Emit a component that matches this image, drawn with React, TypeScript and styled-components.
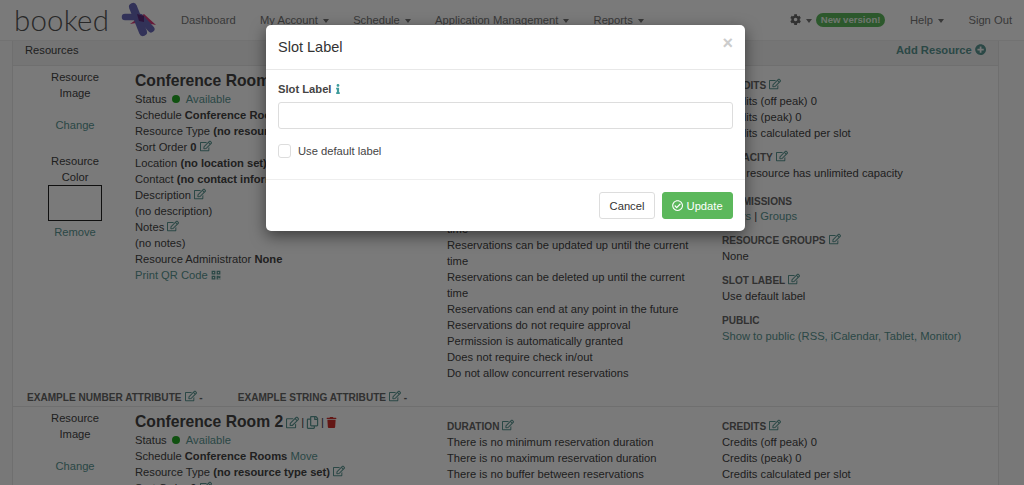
import React from "react";
import styled, { createGlobalStyle } from "styled-components";
import { FaRegEdit, FaRegCopy, FaTrash, FaQrcode, FaCog, FaPlusCircle, FaRegCheckCircle, FaInfo } from "react-icons/fa";

const TEAL = "#5a9692";

const Global = createGlobalStyle`
  html, body { margin: 0; padding: 0; background: #fff; }
  body { font-family: "Liberation Sans", Arial, sans-serif; font-size: 11.2px; line-height: 16px; color: #444; }
`;

const Page = styled.div`
  position: relative;
  width: 1024px;
  height: 485px;
  overflow: hidden;
  background: #fbfbfb;
`;
const Navbar = styled.nav`
  display: flex;
  align-items: center;
  height: 40px;
  padding: 0 12px 0 14px;
  border-bottom: 1px solid #eee;
  background: #fff;
  color: #777;
`;
const Brand = styled.div`
  display: flex;
  align-items: center;
  width: 167px;
  gap: 11px;
`;
const BrandText = styled.span`
  font-family: Lato, sans-serif;
  font-weight: 300;
  font-size: 29.5px;
  line-height: 38px;
  letter-spacing: 0.2px;
  color: #555;
`;
const NavList = styled.div`
  display: flex;
  align-items: center;
  gap: 24.3px;
`;
const NavRight = styled(NavList)`
  margin-left: auto;
  gap: 24.5px;
`;
const NavItem = styled.span`
  display: inline-flex;
  align-items: center;
  white-space: nowrap;
`;
const Caret = styled.i`
  display: inline-block;
  margin-left: 5px;
  margin-top: 2px;
  border-top: 4px solid currentColor;
  border-left: 3.5px solid transparent;
  border-right: 3.5px solid transparent;
`;
const Badge = styled.span`
  margin-left: 4px;
  padding: 0 5px;
  height: 14px;
  line-height: 14px;
  border-radius: 8px;
  background: #5cb85c;
  color: #e8f5e8;
  font-size: 9.6px;
  font-weight: 700;
`;
const Panel = styled.section`
  margin: 0 25px 0 12px;
  border: solid #e8e8e8;
  border-width: 0 1px;
  background: #fff;
`;
const PanelHeading = styled.header`
  display: flex;
  justify-content: space-between;
  align-items: flex-start;
  padding: 1px 12px 0;
  box-sizing: border-box;
  height: 25px;
  background: #f5f5f5;
  border-bottom: 1px solid #e8e8e8;
`;
const AddLink = styled.span`
  display: inline-flex;
  align-items: center;
  gap: 3px;
  font-weight: 700;
  color: ${TEAL};
`;
const ResourceRow = styled.article`
  display: grid;
  grid-template-columns: 122px 312px 275px 1fr;
  height: 319px;
  overflow: hidden;
`;
const ImageCol = styled.div`
  padding: 3px 0 0 2px;
  text-align: center;
  display: flex;
  flex-direction: column;
  align-items: center;
`;
const Gap = styled.div<{ $h: number }>`
  height: ${(p) => p.$h}px;
`;
const ColorBox = styled.div`
  box-sizing: border-box;
  width: 54px;
  height: 36px;
  border: 1px solid #222;
  margin-bottom: 3px;
`;
const DetailsCol = styled.div`
  padding-top: 5px;
`;
const Title = styled.h2`
  margin: 0;
  font-size: 15.7px;
  line-height: 20px;
  font-weight: 700;
  color: #444;
  display: flex;
  align-items: center;
  gap: 2px;
`;
const Line = styled.div`
  height: 16px;
  white-space: nowrap;
`;
const TextCol = styled.div`
  padding-top: 11px;
`;
const Section = styled.div<{ $gap?: number }>`
  margin-bottom: ${(p) => p.$gap ?? 8}px;
`;
const SectionTitle = styled.div<{ $h?: number }>`
  box-sizing: border-box;
  height: ${(p) => p.$h ?? 16}px;
  padding-top: 1px;
  font-size: 10.08px;
  font-weight: 700;
  color: #666;
  text-transform: uppercase;
  white-space: nowrap;
  line-height: 16px;
`;
const Link = styled.a`
  color: ${TEAL};
`;
const EditIcon = styled(FaRegEdit)`
  color: ${TEAL};
  font-size: 12px;
  margin-left: 3px;
  vertical-align: -1px;
`;
const TitleEdit = styled(FaRegEdit)`
  color: ${TEAL};
  font-size: 13px;
  margin-left: 1px;
`;
const Dot = styled.i`
  display: inline-block;
  width: 8px;
  height: 8px;
  border-radius: 50%;
  background: #22aa22;
  margin: 0 6px 0 2px;
`;
const Sep = styled.span`
  font-size: 11.2px;
  font-weight: 400;
`;
const CopyIcon = styled(FaRegCopy)`
  color: ${TEAL};
  font-size: 13px;
`;
const TrashIcon = styled(FaTrash)`
  color: #d0312d;
  font-size: 11px;
`;
const QrIcon = styled(FaQrcode)`
  color: ${TEAL};
  font-size: 10px;
  margin-left: 3px;
  vertical-align: -1px;
`;
const AttributeRow = styled.div`
  display: flex;
  height: 21px;
  padding: 3px 0 0 14px;
  box-sizing: border-box;
  margin-top: 1px;
  gap: 35px;
  border-bottom: 1px solid #e8e8e8;
`;
const Backdrop = styled.div`
  position: absolute;
  inset: 0;
  background: rgba(0, 0, 0, 0.52);
`;
const Modal = styled.div`
  position: absolute;
  left: 266px;
  top: 25px;
  width: 479px;
  height: 206px;
  background: #fff;
  border-radius: 5px;
  box-shadow: 0 5px 15px rgba(0, 0, 0, 0.5);
  display: flex;
  flex-direction: column;
`;
const ModalHeader = styled.header`
  height: 45px;
  box-sizing: border-box;
  border-bottom: 1px solid #e8e8e8;
  padding: 0 12px;
  display: flex;
  justify-content: space-between;
`;
const ModalTitle = styled.h4`
  margin: 0;
  font-size: 14.5px;
  font-weight: 400;
  line-height: 44px;
  color: #333;
`;
const Close = styled.span`
  font-size: 18px;
  font-weight: 700;
  color: #ccc;
  line-height: 24px;
  margin-top: 6px;
`;
const ModalBody = styled.div`
  height: 109px;
  box-sizing: border-box;
  padding: 11px 12px 0;
`;
const FieldLabel = styled.label`
  display: flex;
  align-items: center;
  font-weight: 700;
  gap: 2px;
  height: 16px;
  margin-bottom: 5px;
`;
const InfoIcon = styled(FaInfo)`
  color: #3f9c9c;
  font-size: 10px;
`;
const Input = styled.input`
  display: block;
  box-sizing: border-box;
  width: 100%;
  height: 27px;
  border: 1px solid #ddd;
  border-radius: 3px;
  background: #fff;
`;
const CheckRow = styled.div`
  display: flex;
  align-items: center;
  gap: 7px;
  margin-top: 14px;
`;
const CheckBox = styled.span`
  box-sizing: border-box;
  width: 13px;
  height: 14px;
  border: 1px solid #ddd;
  border-radius: 3px;
`;
const ModalFooter = styled.footer`
  border-top: 1px solid #eee;
  flex: 1;
  padding: 12px 12px 0;
  display: flex;
  justify-content: flex-end;
  gap: 7px;
`;
const Button = styled.button<{ $primary?: boolean }>`
  height: 27px;
  box-sizing: border-box;
  border-radius: 3px;
  border: 1px solid ${(p) => (p.$primary ? "#5cb85c" : "#ddd")};
  background: ${(p) => (p.$primary ? "#5cb85c" : "#fff")};
  color: ${(p) => (p.$primary ? "#fff" : "#333")};
  font: 11.2px/16px "Liberation Sans", Arial, sans-serif;
  width: ${(p) => (p.$primary ? 71 : 56)}px;
  display: inline-flex;
  align-items: center;
  justify-content: center;
  gap: 3px;
  padding: 0;
`;

const Logo = () => (
  <svg width="38" height="38" viewBox="0 0 38 38">
    <path d="M5 16 L20 16" stroke="#6a6ab8" strokeWidth="6.5" strokeLinecap="round" />
    <path d="M10 23 L24 13 L36 24 L22 21 Z" fill="#d83a78" />
    <path d="M13 6 L23 31" stroke="#6a6ab8" strokeWidth="8" strokeLinecap="round" />
    <path d="M22 18 L31 28" stroke="#6a6ab8" strokeWidth="7" strokeLinecap="round" />
    <path d="M17 13 L24 15 L24 21 L19 20 Z" fill="#5a2a7a" />
  </svg>
);

const durations = [
  "There is no minimum reservation duration",
  "There is no maximum reservation duration",
  "There is no buffer between reservations",
];
const credits = ["Credits (off peak) 0", "Credits (peak) 0", "Credits calculated per slot"];

const Details = ({ n }: { n: number }) => (
  <DetailsCol>
    <Title>
      Conference Room {n} <TitleEdit /> <Sep>|</Sep> <CopyIcon /> <Sep>|</Sep> <TrashIcon />
    </Title>
    <Line>Status <Dot /><Link>Available</Link></Line>
    <Line>Schedule <b>Conference Rooms</b> <Link>Move</Link></Line>
    <Line>Resource Type <b>(no resource type set)</b><EditIcon /></Line>
    <Line>Sort Order <b>0</b><EditIcon /></Line>
    <Line>Location <b>(no location set)</b><EditIcon /></Line>
    <Line>Contact <b>(no contact information)</b><EditIcon /></Line>
    <Line>Description<EditIcon /></Line>
    <Line>(no description)</Line>
    <Line>Notes<EditIcon /></Line>
    <Line>(no notes)</Line>
    <Line>Resource Administrator <b>None</b></Line>
    <Line><Link>Print QR Code<QrIcon /></Link></Line>
  </DetailsCol>
);

const ImageColumn = ({ color }: { color: boolean }) => (
  <ImageCol>
    <Line>Resource</Line>
    <Line>Image</Line>
    <Gap $h={16} />
    <Link>Change</Link>
    {color && (
      <>
        <Gap $h={20} />
        <Line>Resource</Line>
        <Line>Color</Line>
        <ColorBox />
        <Link>Remove</Link>
      </>
    )}
  </ImageCol>
);

export default function App() {
  return (
    <Page>
      <Global />
      <Navbar>
        <Brand>
          <BrandText>booked</BrandText>
          <Logo />
        </Brand>
        <NavList>
          <NavItem>Dashboard</NavItem>
          <NavItem>My Account<Caret /></NavItem>
          <NavItem>Schedule<Caret /></NavItem>
          <NavItem>Application Management<Caret /></NavItem>
          <NavItem>Reports<Caret /></NavItem>
        </NavList>
        <NavRight>
          <NavItem><FaCog color="#666" /><Caret /><Badge>New version!</Badge></NavItem>
          <NavItem>Help<Caret /></NavItem>
          <NavItem>Sign Out</NavItem>
        </NavRight>
      </Navbar>
      <Panel>
        <PanelHeading>
          <span>Resources</span>
          <AddLink>Add Resource <FaPlusCircle /></AddLink>
        </PanelHeading>
        <ResourceRow>
          <ImageColumn color />
          <Details n={1} />
          <TextCol>
            <Section $gap={16}>
              <SectionTitle>Duration<EditIcon /></SectionTitle>
              {durations.map((d) => <Line key={d}>{d}</Line>)}
            </Section>
            <Section>
              <SectionTitle>Access<EditIcon /></SectionTitle>
              <Line>Reservations can be created in the past</Line>
              <Line>Reservations can be made at any time</Line>
              <Line>Reservations can be created up until the current</Line>
              <Line>time</Line>
              <Line>Reservations can be updated up until the current</Line>
              <Line>time</Line>
              <Line>Reservations can be deleted up until the current</Line>
              <Line>time</Line>
              <Line>Reservations can end at any point in the future</Line>
              <Line>Reservations do not require approval</Line>
              <Line>Permission is automatically granted</Line>
              <Line>Does not require check in/out</Line>
              <Line>Do not allow concurrent reservations</Line>
            </Section>
          </TextCol>
          <TextCol>
            <Section>
              <SectionTitle>Credits<EditIcon /></SectionTitle>
              {credits.map((c) => <Line key={c}>{c}</Line>)}
            </Section>
            <Section $gap={12}>
              <SectionTitle>Capacity<EditIcon /></SectionTitle>
              <Line>This resource has unlimited capacity</Line>
            </Section>
            <Section>
              <SectionTitle $h={15}>Permissions</SectionTitle>
              <Line><Link>Users</Link> | <Link>Groups</Link></Line>
            </Section>
            <Section>
              <SectionTitle>Resource Groups<EditIcon /></SectionTitle>
              <Line>None</Line>
            </Section>
            <Section>
              <SectionTitle>Slot Label<EditIcon /></SectionTitle>
              <Line>Use default label</Line>
            </Section>
            <Section>
              <SectionTitle>Public</SectionTitle>
              <Line><Link>Show to public (RSS, iCalendar, Tablet, Monitor)</Link></Line>
            </Section>
          </TextCol>
        </ResourceRow>
        <AttributeRow>
          <SectionTitle>Example Number Attribute<EditIcon /> -</SectionTitle>
          <SectionTitle>Example String Attribute<EditIcon /> -</SectionTitle>
        </AttributeRow>
        <ResourceRow>
          <ImageColumn color={false} />
          <Details n={2} />
          <TextCol>
            <SectionTitle>Duration<EditIcon /></SectionTitle>
            {durations.map((d) => <Line key={d}>{d}</Line>)}
          </TextCol>
          <TextCol>
            <SectionTitle>Credits<EditIcon /></SectionTitle>
            {credits.map((c) => <Line key={c}>{c}</Line>)}
          </TextCol>
        </ResourceRow>
      </Panel>
      <Backdrop />
      <Modal>
        <ModalHeader>
          <ModalTitle>Slot Label</ModalTitle>
          <Close>×</Close>
        </ModalHeader>
        <ModalBody>
          <FieldLabel>Slot Label <InfoIcon /></FieldLabel>
          <Input />
          <CheckRow>
            <CheckBox />
            <span>Use default label</span>
          </CheckRow>
        </ModalBody>
        <ModalFooter>
          <Button>Cancel</Button>
          <Button $primary><FaRegCheckCircle /> Update</Button>
        </ModalFooter>
      </Modal>
    </Page>
  );
}
